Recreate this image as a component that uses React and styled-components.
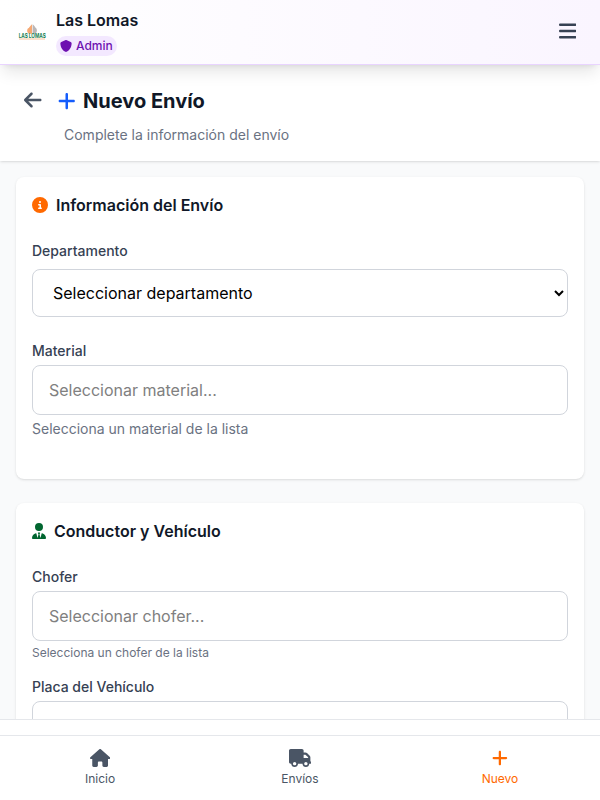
import styled, { createGlobalStyle } from "styled-components";
import {
  FaArrowLeft,
  FaBars,
  FaCircleInfo,
  FaHouse,
  FaPlus,
  FaShield,
  FaTruck,
  FaUserTie,
} from "react-icons/fa6";

const GlobalStyle = createGlobalStyle`
  * {
    box-sizing: border-box;
  }
  body {
    margin: 0;
    overflow: hidden;
    font-family: Inter, "Liberation Sans", sans-serif;
    color: #101828;
    background: #f9fafb;
  }
  h1, h2, p {
    margin: 0;
  }
  svg {
    display: block;
    flex-shrink: 0;
  }
`;

const Screen = styled.div`
  display: flex;
  flex-direction: column;
  height: 100vh;
`;
const Header = styled.header`
  position: relative;
  z-index: 2;
  display: flex;
  flex-shrink: 0;
  align-items: center;
  justify-content: space-between;
  height: 65px;
  padding: 0 24px 2px 16px;
  border-bottom: 1px solid #e9d4ff;
  background: linear-gradient(to right, #fff, #faf5ff);
  box-shadow: 0 10px 15px -3px rgba(0, 0, 0, 0.1),
    0 4px 6px -4px rgba(0, 0, 0, 0.1);
`;
const Brand = styled.div`
  display: flex;
  align-items: center;
  gap: 8px;
  padding-top: 1px;
`;
const BrandName = styled.div`
  font-size: 16px;
  font-weight: 600;
  line-height: 24px;
  margin-bottom: 4px;
`;
const Role = styled.span`
  display: flex;
  align-items: center;
  gap: 4px;
  width: fit-content;
  height: 20px;
  padding: 0 4px;
  border-radius: 10px;
  font-size: 12px;
  font-weight: 500;
  color: #6e11b0;
  background: #f3e8ff;
`;
const MenuButton = styled.button`
  padding: 0;
  border: 0;
  font-size: 20px;
  color: #364153;
  background: none;
  & svg {
    width: 0.875em;
  }
`;
const TitleBar = styled.div`
  position: relative;
  z-index: 1;
  flex-shrink: 0;
  height: 96px;
  padding: 22px 24px 0;
  background: #fff;
  box-shadow: 0 1px 3px rgba(0, 0, 0, 0.1), 0 1px 2px -1px rgba(0, 0, 0, 0.1);
`;
const TitleRow = styled.div`
  display: flex;
  align-items: center;
  gap: 16px;
`;
const BackButton = styled(MenuButton)`
  margin-top: -2px;
  color: #4a5565;
`;
const Title = styled.h1`
  display: flex;
  align-items: center;
  gap: 8px;
  font-size: 20px;
  font-weight: 700;
  line-height: 28px;
  & svg {
    width: 0.875em;
    color: #155dfc;
  }
`;
const Subtitle = styled.p`
  margin: 10px 0 0 40px;
  font-size: 14px;
  line-height: 20px;
  color: #6a7282;
`;
const Content = styled.main`
  display: flex;
  flex: 1;
  flex-direction: column;
  gap: 24px;
  min-height: 0;
  padding: 16px 16px 0;
  overflow: hidden;
`;
const Card = styled.section`
  flex-shrink: 0;
  height: 302px;
  padding: 16px;
  border-radius: 8px;
  background: #fff;
  box-shadow: 0 1px 3px rgba(0, 0, 0, 0.1), 0 1px 2px -1px rgba(0, 0, 0, 0.1);
`;
const CardTitle = styled.h2`
  display: flex;
  align-items: center;
  gap: 8px;
  margin-bottom: 24px;
  font-size: 16px;
  font-weight: 600;
  line-height: 24px;
  & svg {
    width: ${({ $iconWidth = 1 }) => $iconWidth}em;
    color: ${({ $iconColor }) => $iconColor};
  }
`;
const Field = styled.div`
  margin-bottom: ${({ $space = 0 }) => $space}px;
`;
const Label = styled.label`
  display: block;
  margin-bottom: ${({ $space = 4 }) => $space}px;
  font-size: 14px;
  font-weight: 500;
  line-height: 20px;
  color: #364153;
`;
const Select = styled.select`
  display: block;
  width: 100%;
  height: 48px;
  padding: 0 16px;
  border: 1px solid #d1d5dc;
  border-radius: 8px;
  font: inherit;
  font-size: 16px;
  color: #000;
  background: #fff;
`;
const Input = styled.input`
  display: block;
  width: 100%;
  height: 50px;
  padding: 0 16px;
  border: 1px solid #d1d5dc;
  border-radius: 8px;
  font: inherit;
  font-size: 16px;
  background: #fff;
  &::placeholder {
    color: #808080;
  }
`;
const Hint = styled.p`
  margin-top: 4px;
  font-size: ${({ $small }) => ($small ? 12 : 14)}px;
  line-height: ${({ $small }) => ($small ? 16 : 20)}px;
  color: #6a7282;
`;
const Footer = styled.footer`
  flex-shrink: 0;
  height: 81px;
  padding-top: 15px;
  border-top: 1px solid #e5e7eb;
  background: #fff;
`;
const Nav = styled.nav`
  display: grid;
  grid-template-columns: repeat(3, 1fr);
  height: 65px;
  border-top: 1px solid #e5e7eb;
`;
const NavItem = styled.a`
  display: flex;
  flex-direction: column;
  align-items: center;
  gap: 4px;
  padding-top: 13px;
  font-size: 12px;
  line-height: 16px;
  color: ${({ $active }) => ($active ? "#ff6900" : "#4a5565")};
  & svg {
    width: ${({ $iconWidth }) => $iconWidth}em;
    font-size: 18px;
  }
`;
const LogoSvg = styled.svg`
  width: 32px;
  height: 32px;
  overflow: visible;
`;

const Logo = () => (
  <LogoSvg viewBox="0 0 32 32">
    <path d="M16 8.3v9.4h-3.2c-2-1.4-2-3.4-1-5.2 1.4 0 2.4-3 4.2-4.2z" fill="#f5a873" />
    <path d="M16.6 8.3c1.8 1.2 2.2 3 3.8 4.2 1.2 2 .2 4-1 5.2h-2.8z" fill="#b9b6b7" />
    <text
      x="2.7"
      y="21.8"
      textLength="27"
      lengthAdjust="spacingAndGlyphs"
      fontFamily="Inter, sans-serif"
      fontSize="5.8"
      fontWeight="700"
      fill="#168052"
    >
      LAS LOMAS
    </text>
    <path d="M3 23h26" stroke="#f7bd91" strokeWidth="0.9" />
  </LogoSvg>
);

// iconWidth is the glyph's own width in em
const navItems = [
  { label: "Inicio", Icon: FaHouse, iconWidth: 1.125 },
  { label: "Envíos", Icon: FaTruck, iconWidth: 1.25 },
  { label: "Nuevo", Icon: FaPlus, iconWidth: 0.875, active: true },
];

export default function App() {
  return (
    <Screen>
      <GlobalStyle />
      <Header>
        <Brand>
          <Logo />
          <div>
            <BrandName>Las Lomas</BrandName>
            <Role>
              <FaShield />
              Admin
            </Role>
          </div>
        </Brand>
        <MenuButton aria-label="Menú">
          <FaBars />
        </MenuButton>
      </Header>
      <TitleBar>
        <TitleRow>
          <BackButton aria-label="Volver">
            <FaArrowLeft />
          </BackButton>
          <Title>
            <FaPlus />
            Nuevo Envío
          </Title>
        </TitleRow>
        <Subtitle>Complete la información del envío</Subtitle>
      </TitleBar>
      <Content>
        <Card>
          <CardTitle $iconColor="#ff6900">
            <FaCircleInfo />
            Información del Envío
          </CardTitle>
          <Field $space={24}>
            <Label $space={8}>Departamento</Label>
            <Select>
              <option>Seleccionar departamento</option>
            </Select>
          </Field>
          <Field>
            <Label>Material</Label>
            <Input placeholder="Seleccionar material..." />
            <Hint>Selecciona un material de la lista</Hint>
          </Field>
        </Card>
        <Card>
          <CardTitle $iconColor="#016630" $iconWidth={0.875}>
            <FaUserTie />
            Conductor y Vehículo
          </CardTitle>
          <Field $space={16}>
            <Label>Chofer</Label>
            <Input placeholder="Seleccionar chofer..." />
            <Hint $small>Selecciona un chofer de la lista</Hint>
          </Field>
          <Field>
            <Label>Placa del Vehículo</Label>
            <Input />
          </Field>
        </Card>
      </Content>
      <Footer>
        <Nav>
          {navItems.map(({ label, Icon, iconWidth, active }) => (
            <NavItem key={label} $active={active} $iconWidth={iconWidth}>
              <Icon />
              {label}
            </NavItem>
          ))}
        </Nav>
      </Footer>
    </Screen>
  );
}
